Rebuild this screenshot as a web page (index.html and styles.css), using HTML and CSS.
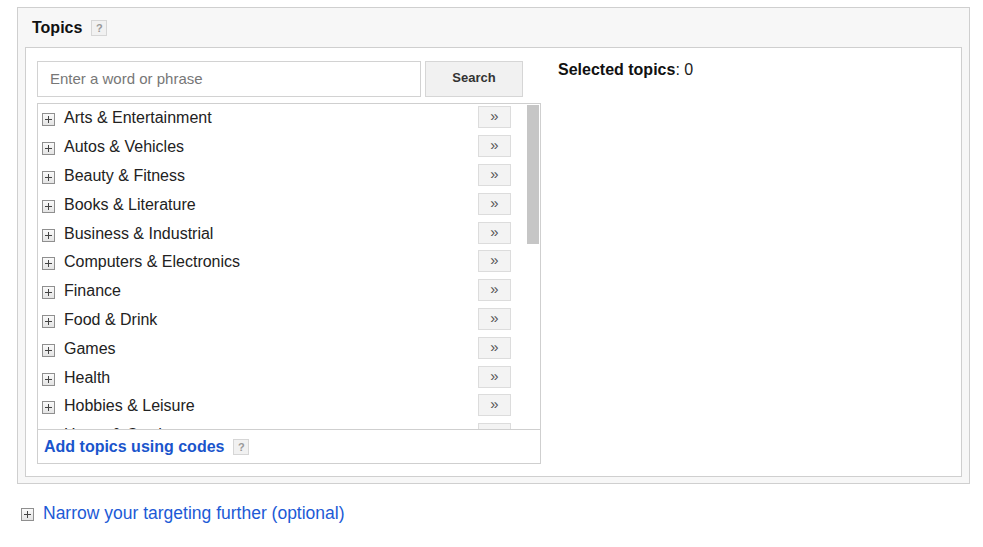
FILE: index.html
```html
<!DOCTYPE html>
<html>
<head>
<meta charset="utf-8">
<link rel="stylesheet" href="styles.css">
</head>
<body>
<div class="page">
  <section class="panel">
    <div class="panel-head">
      <span class="panel-title">Topics</span>
      <span class="help">?</span>
    </div>
    <div class="panel-body">
      <div class="left">
        <div class="search-row">
          <input class="search-input" type="text" placeholder="Enter a word or phrase">
          <button class="search-btn">Search</button>
        </div>
        <div class="listbox">
          <div class="list-area">
            <ul class="list">
              <li class="row"><span class="plus"></span><span class="label">Arts &amp; Entertainment</span><span class="add">»</span></li>
              <li class="row"><span class="plus"></span><span class="label">Autos &amp; Vehicles</span><span class="add">»</span></li>
              <li class="row"><span class="plus"></span><span class="label">Beauty &amp; Fitness</span><span class="add">»</span></li>
              <li class="row"><span class="plus"></span><span class="label">Books &amp; Literature</span><span class="add">»</span></li>
              <li class="row"><span class="plus"></span><span class="label">Business &amp; Industrial</span><span class="add">»</span></li>
              <li class="row"><span class="plus"></span><span class="label">Computers &amp; Electronics</span><span class="add">»</span></li>
              <li class="row"><span class="plus"></span><span class="label">Finance</span><span class="add">»</span></li>
              <li class="row"><span class="plus"></span><span class="label">Food &amp; Drink</span><span class="add">»</span></li>
              <li class="row"><span class="plus"></span><span class="label">Games</span><span class="add">»</span></li>
              <li class="row"><span class="plus"></span><span class="label">Health</span><span class="add">»</span></li>
              <li class="row"><span class="plus"></span><span class="label">Hobbies &amp; Leisure</span><span class="add">»</span></li>
              <li class="row"><span class="plus"></span><span class="label">Home &amp; Garden</span><span class="add">»</span></li>
            </ul>
            <div class="scrollbar"><div class="thumb"></div></div>
          </div>
          <div class="list-foot">
            <a class="codes-link" href="#">Add topics using codes</a>
            <span class="help">?</span>
          </div>
        </div>
      </div>
      <div class="right">
        <span class="sel-label">Selected topics</span>: 0
      </div>
    </div>
  </section>
  <div class="narrow">
    <span class="plus"></span>
    <a class="narrow-link" href="#">Narrow your targeting further (optional)</a>
  </div>
</div>
</body>
</html>
```
FILE: styles.css
```css
* { box-sizing: border-box; }
html, body { margin: 0; padding: 0; background: #fff; }
body {
  font-family: "Liberation Sans", Arial, sans-serif;
  color: #222;
  width: 983px;
  height: 547px;
  overflow: hidden;
}
.page { padding: 7px 14px 0 17px; }

.panel {
  background: #f7f7f7;
  border: 1px solid #cfcfcf;
  width: 953px;
  padding: 0 7px 6px 7px;
}
.panel-head {
  display: flex;
  align-items: center;
  height: 39px;
  padding-left: 7px;
}
.panel-title { font-size: 16px; font-weight: bold; color: #111; }
.help {
  display: inline-flex;
  align-items: center;
  justify-content: center;
  width: 16px;
  height: 16px;
  border: 1px solid #d6d6d6;
  background: #f1f1f1;
  color: #999;
  font-size: 11px;
  font-weight: bold;
  margin-left: 9px;
}
.panel-body {
  background: #fff;
  border: 1px solid #cfcfcf;
  height: 430px;
  display: flex;
  padding: 13px 0 0 11px;
}
.left { width: 504px; }
.search-row { display: flex; align-items: flex-start; height: 42px; }
.search-input {
  width: 384px;
  height: 36px;
  border: 1px solid #d2d2d2;
  padding: 0 12px 2px 12px;
  font-family: "Liberation Sans", Arial, sans-serif;
  font-size: 15px;
  color: #222;
  outline: none;
}
.search-input::placeholder { color: #777; }
.search-btn {
  margin-left: 4px;
  width: 98px;
  height: 36px;
  border: 1px solid #d6d6d6;
  background: #f1f1f1;
  font-family: "Liberation Sans", Arial, sans-serif;
  font-size: 13px;
  font-weight: bold;
  color: #333;
  padding: 0 0 3px 0;
}
.listbox {
  border: 1px solid #cfcfcf;
  width: 504px;
  height: 361px;
  display: flex;
  flex-direction: column;
}
.list-area {
  display: flex;
  height: 326px;
  border-bottom: 1px solid #cfcfcf;
  overflow: hidden;
}
.list {
  list-style: none;
  margin: 0;
  padding: 0;
  flex: 1;
  overflow: hidden;
}
.scrollbar {
  width: 13px;
  padding: 1px 1px 0 0;
}
.thumb {
  height: 139px;
  background: #c6c6c6;
}
.row {
  height: 28.8px;
  display: flex;
  align-items: center;
  padding-left: 4px;
}
.plus {
  width: 13px;
  height: 13px;
  border: 1px solid #8f8f8f;
  background: linear-gradient(#fafafa, #e4e4e4);
  position: relative;
  flex-shrink: 0;
  margin-top: 3px;
}
.plus::before, .plus::after {
  content: "";
  position: absolute;
  background: #444;
}
.plus::before { left: 2px; right: 2px; top: 5px; height: 1px; }
.plus::after { top: 2px; bottom: 2px; left: 5px; width: 1px; }
.label {
  flex: 1;
  font-size: 16px;
  margin-left: 9px;
  color: #222;
}
.add {
  width: 33px;
  height: 22px;
  border: 1px solid #dcdcdc;
  background: #f3f3f3;
  color: #555;
  font-size: 15px;
  display: flex;
  align-items: center;
  justify-content: center;
  margin-right: 16px;
  padding-bottom: 3px;
  margin-top: -2px;
}
.list-foot {
  display: flex;
  align-items: center;
  height: 33px;
  padding-left: 6px;
}
.codes-link {
  font-size: 16px;
  font-weight: bold;
  color: #1a55cc;
  text-decoration: none;
}
.list-foot .help { margin-left: 9px; }
.right {
  padding-left: 17px;
  font-size: 16px;
  color: #222;
}
.sel-label { font-weight: bold; color: #111; }

.narrow {
  display: flex;
  align-items: center;
  margin-top: 19px;
  padding-left: 4px;
}
.narrow .plus { margin-top: 2px; }
.narrow-link {
  font-size: 17.5px;
  color: #1c5ad6;
  text-decoration: none;
  margin-left: 9px;
}
```
